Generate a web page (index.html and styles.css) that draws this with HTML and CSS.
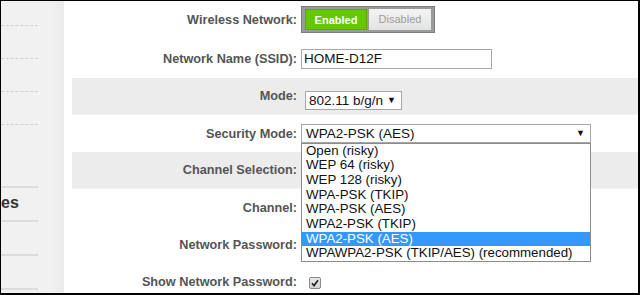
FILE: index.html
```html
<!DOCTYPE html>
<html lang="en">
<head>
    <meta charset="UTF-8">
    <meta name="viewport" content="width=device-width, initial-scale=1.0">
    <title>Wireless Settings</title>
    <link rel="stylesheet" href="styles.css">
</head>
<body>
    <div class="frame">
        <div class="sidebar">
            <div class="side-link first"></div>
            <div class="side-link"></div>
            <div class="side-link"></div>
            <div class="side-link"></div>
            <div class="side-gap"></div>
            <div class="side-head">es</div>
            <div class="side-item"></div>
            <div class="side-item"></div>
        </div>

        <div class="main">
            <div class="row row-first">
                <div class="label">Wireless Network:</div>
                <div class="toggle">
                    <span class="toggle-on">Enabled</span>
                    <span class="toggle-off">Disabled</span>
                </div>
            </div>

            <div class="row row-second">
                <div class="label">Network Name (SSID):</div>
                <div class="text-input">HOME-D12F</div>
            </div>

            <div class="row band">
                <div class="label">Mode:</div>
                <div class="select mode-select">
                    <span>802.11 b/g/n</span>
                    <span class="arrow">&#9660;</span>
                </div>
            </div>

            <div class="row">
                <div class="label">Security Mode:</div>
                <div class="select-wrap">
                    <div class="select security-select">
                        <span>WPA2-PSK (AES)</span>
                        <span class="arrow">&#9660;</span>
                    </div>
                    <ul class="dropdown">
                        <li>Open (risky)</li>
                        <li>WEP 64 (risky)</li>
                        <li>WEP 128 (risky)</li>
                        <li>WPA-PSK (TKIP)</li>
                        <li>WPA-PSK (AES)</li>
                        <li>WPA2-PSK (TKIP)</li>
                        <li class="selected">WPA2-PSK (AES)</li>
                        <li>WPAWPA2-PSK (TKIP/AES) (recommended)</li>
                    </ul>
                </div>
            </div>

            <div class="row band">
                <div class="label">Channel Selection:</div>
            </div>

            <div class="row">
                <div class="label">Channel:</div>
            </div>

            <div class="row">
                <div class="label">Network Password:</div>
            </div>

            <div class="row">
                <div class="label">Show Network Password:</div>
                <span class="checkbox">
                    <svg width="8" height="8" viewBox="0 0 8 8">
                        <path d="M1 4.3 L3 6.6 L7 1.2" fill="none" stroke="#222" stroke-width="1.6"/>
                    </svg>
                </span>
            </div>
        </div>
    </div>
</body>
</html>
```

FILE: styles.css
```css
body { margin: 0; font-family: "Liberation Sans", Arial, sans-serif; background: #000; }
.frame {
    width: 640px;
    height: 295px;
    box-sizing: border-box;
    border-top: 1px solid #000;
    border-left: 1px solid #000;
    border-right: 2px solid #000;
    border-bottom: 2px solid #000;
    background: #fff;
    display: flex;
    overflow: hidden;
}

/* left navigation, mostly cut off */
.sidebar {
    width: 63px;
    flex: none;
    background: linear-gradient(to right, #f1f1f1 80%, #ebebeb);
    display: flex;
    flex-direction: column;
}
.side-link { width: 37px; height: 32px; border-bottom: 1px dashed #d0d0d0; flex: none; }
.side-link.first { height: 24px; }
.side-gap { height: 61px; width: 37px; border-bottom: 2px solid #dcdcdc; flex: none; }
.side-head {
    height: 32px;
    width: 37px;
    border-bottom: 2px solid #dcdcdc;
    font-size: 16px;
    font-weight: bold;
    color: #333;
    line-height: 30px;
    flex: none;
}
.side-item { width: 37px; height: 32px; border-bottom: 2px solid #dcdcdc; flex: none; }

/* settings form */
.main { flex: 1; padding-left: 8px; display: flex; flex-direction: column; }
.row { display: flex; align-items: center; height: 37px; flex: none; }
.row-first { height: 39px; padding-bottom: 2px; box-sizing: border-box; }
.row-second { height: 38px; }
.band { background: #ececec; border-bottom: 1px solid #f3f3f3; box-sizing: border-box; }
.label {
    width: 225px;
    margin-right: 4px;
    text-align: right;
    font-size: 12.7px;
    font-weight: bold;
    color: #555;
}

.toggle {
    display: flex;
    gap: 2px;
    padding: 2px 3px;
    background: #9a9a9a;
    border: 1px solid #7c7c7c;
}
.toggle span {
    width: 62px;
    height: 21px;
    line-height: 21px;
    text-align: center;
    font-size: 11px;
    box-sizing: border-box;
}
.toggle-on { background: #66c600; color: #fff; font-weight: bold; border: 1px solid #5aab05; }
.toggle-off { background: linear-gradient(#f4f4f4, #e2e2e2); color: #9d9d9d; }

.text-input {
    width: 191px;
    height: 20px;
    box-sizing: border-box;
    border: 1px solid #a9a9a9;
    padding-left: 2px;
    font-size: 13.5px;
    line-height: 18px;
    color: #111;
}

.select {
    display: flex;
    justify-content: space-between;
    align-items: center;
    height: 19px;
    box-sizing: border-box;
    border: 1px solid #a6a6a6;
    padding: 0 5px 0 3px;
    font-size: 13.5px;
    color: #111;
    background: #fff;
}
.arrow { font-size: 9px; color: #111; }
.mode-select { width: 97px; margin-left: 4px; margin-top: 8px; }
.select-wrap { position: relative; margin-top: -1px; }
.security-select { width: 290px; padding-left: 4px; }

.dropdown {
    position: absolute;
    top: 19px;
    left: 0;
    width: 288px;
    margin: 0;
    padding: 0;
    list-style: none;
    background: #fff;
    border: 1px solid #8c8c8c;
    z-index: 2;
}
.dropdown li {
    height: 14.7px;
    line-height: 14.7px;
    padding-left: 4px;
    font-size: 13.3px;
    color: #111;
}
.dropdown li.selected { background: #3399ff; color: #fff; }

.checkbox {
    width: 12px;
    height: 12px;
    margin-left: 8px;
    margin-top: 2px;
    box-sizing: border-box;
    border: 1px solid #8a8a8a;
    border-radius: 2px;
    background: linear-gradient(#e8e8e8, #d4d4d4);
    display: flex;
    align-items: center;
    justify-content: center;
}
```
